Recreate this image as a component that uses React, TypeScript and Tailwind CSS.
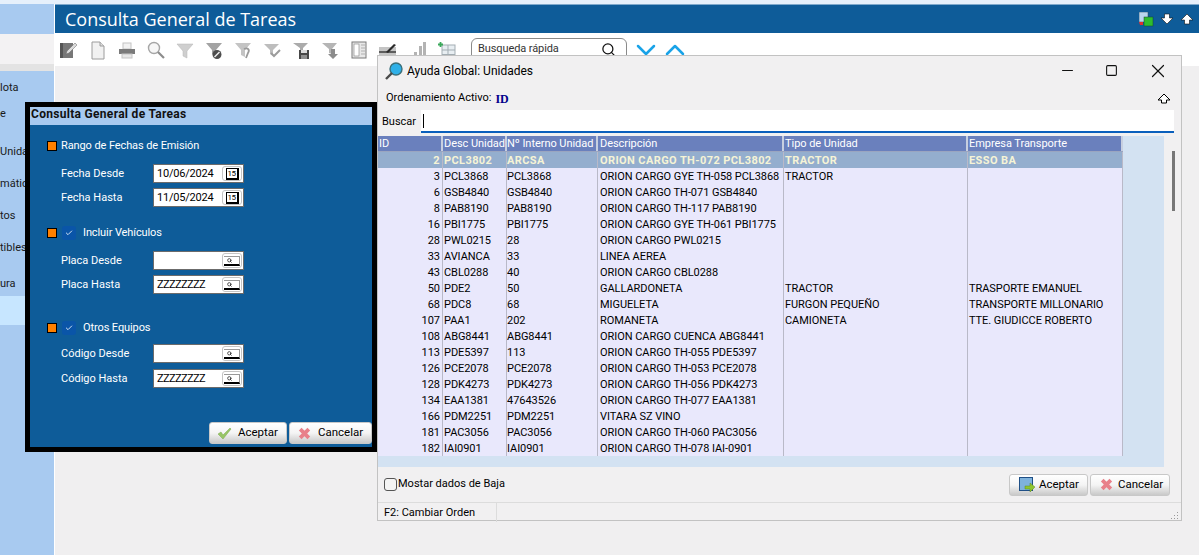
import type { ReactNode } from 'react';
import { X, Minus, Square, ChevronDown, ChevronUp, Search, Check } from 'lucide-react';

const rows = [
  ['2', 'PCL3802', 'ARCSA', 'ORION CARGO TH-072 PCL3802', 'TRACTOR', 'ESSO BA'],
  ['3', 'PCL3868', 'PCL3868', 'ORION CARGO GYE TH-058 PCL3868', 'TRACTOR', ''],
  ['6', 'GSB4840', 'GSB4840', 'ORION CARGO TH-071 GSB4840', '', ''],
  ['8', 'PAB8190', 'PAB8190', 'ORION CARGO TH-117 PAB8190', '', ''],
  ['16', 'PBI1775', 'PBI1775', 'ORION CARGO GYE TH-061 PBI1775', '', ''],
  ['28', 'PWL0215', '28', 'ORION CARGO PWL0215', '', ''],
  ['33', 'AVIANCA', '33', 'LINEA AEREA', '', ''],
  ['43', 'CBL0288', '40', 'ORION CARGO CBL0288', '', ''],
  ['50', 'PDE2', '50', 'GALLARDONETA', 'TRACTOR', 'TRASPORTE EMANUEL'],
  ['68', 'PDC8', '68', 'MIGUELETA', 'FURGON PEQUEÑO', 'TRANSPORTE MILLONARIO'],
  ['107', 'PAA1', '202', 'ROMANETA', 'CAMIONETA', 'TTE. GIUDICCE ROBERTO'],
  ['108', 'ABG8441', 'ABG8441', 'ORION CARGO CUENCA ABG8441', '', ''],
  ['113', 'PDE5397', '113', 'ORION CARGO TH-055 PDE5397', '', ''],
  ['126', 'PCE2078', 'PCE2078', 'ORION CARGO TH-053 PCE2078', '', ''],
  ['128', 'PDK4273', 'PDK4273', 'ORION CARGO TH-056 PDK4273', '', ''],
  ['134', 'EAA1381', '47643526', 'ORION CARGO TH-077 EAA1381', '', ''],
  ['166', 'PDM2251', 'PDM2251', 'VITARA SZ VINO', '', ''],
  ['181', 'PAC3056', 'PAC3056', 'ORION CARGO TH-060 PAC3056', '', ''],
  ['182', 'IAI0901', 'IAI0901', 'ORION CARGO TH-078 IAI-0901', '', ''],
];

const headers = ['ID', 'Desc Unidad', 'Nº Interno Unidad', 'Descripción', 'Tipo de Unidad', 'Empresa Transporte'];

const colClass = 'grid grid-cols-[65px_64px_91px_186px_184px_155px]';

const sideItems = [
  { label: 'lota', cls: 'h-[26px]' },
  { label: 'e', cls: 'h-[26px]' },
  { label: 'Unida', cls: 'h-[32px] mt-[9px]' },
  { label: 'mátic', cls: 'h-[32px]' },
  { label: 'tos', cls: 'h-[32px]' },
  { label: 'tibles', cls: 'h-[32px]' },
  { label: 'ura', cls: 'h-[24px] mt-[8px]' },
];

const toolbarIcons: ReactNode[] = [
  <>
    <rect x="1" y="3" width="13" height="15" fill="#777" />
    <rect x="1" y="3" width="3" height="15" fill="#555" />
    <path d="M7 14l1-3 8-8 2 2-8 8z" fill="#dcdcdc" stroke="#666" strokeWidth="0.5" />
  </>,
  <>
    <path d="M4 2h8l4 4v13H4z" fill="#f1f1f1" stroke="#9c9c9c" />
    <path d="M12 2v4h4" fill="#ddd" stroke="#9c9c9c" />
  </>,
  <>
    <rect x="6" y="3" width="8" height="6" fill="#f2f2f2" stroke="#c4c4c4" />
    <rect x="2" y="9" width="16" height="5" fill="#7a7a7a" />
    <rect x="5" y="14" width="10" height="4" fill="#e6e6e6" stroke="#c4c4c4" />
  </>,
  <>
    <circle cx="8" cy="8" r="5.5" fill="#f7f7f7" stroke="#a6a6a6" strokeWidth="1.4" />
    <path d="M12 12l6 6" stroke="#8c8c8c" strokeWidth="2.2" />
  </>,
  <path d="M2 4h16l-6 7v7l-4-2v-5z" fill="#cfcfcf" stroke="#b5b5b5" strokeWidth="0.5" />,
  <>
    <path d="M2 3h16l-6 7v6l-4-2v-4z" fill="#a3a3a3" />
    <circle cx="13" cy="14.5" r="4.5" fill="#4d4d4d" />
    <path d="M10.5 17l5-5" stroke="#eee" strokeWidth="1.4" />
  </>,
  <>
    <path d="M2 3h16l-6 7v7l-4-2v-5z" fill="#c4c4c4" />
    <path d="M11 9c4-2 6 1 4 4l-2 5" stroke="#9a9a9a" strokeWidth="1.8" fill="none" />
  </>,
  <>
    <path d="M2 4h15l-6 6v6l-3-2v-4z" fill="#bdbdbd" />
    <path d="M9 13l3 3 6-6" stroke="#9c9c9c" strokeWidth="2" fill="none" />
  </>,
  <>
    <path d="M2 3h15l-5 5v3l-3 1V8z" fill="#ababab" />
    <rect x="8" y="10" width="10" height="9" fill="#474747" />
    <rect x="10" y="10" width="6" height="3" fill="#ddd" />
    <rect x="10" y="15" width="6" height="4" fill="#8f8f8f" />
  </>,
  <>
    <path d="M2 3h15l-5 6v5l-3-1V9z" fill="#b5b5b5" />
    <path d="M11 9h4v5h3l-5 5-5-5h3z" fill="#8c8c8c" />
  </>,
  <>
    <rect x="3" y="2" width="14" height="16" fill="#e8e8e8" stroke="#7a7a7a" />
    <rect x="5" y="4" width="5" height="12" fill="#fff" stroke="#808080" strokeWidth="0.6" />
    <path d="M12 5h4M12 8h4M12 11h4M12 14h4" stroke="#b0b0b0" />
  </>,
  <>
    <rect x="1" y="7" width="17" height="10" fill="#c4c4c4" />
    <rect x="1" y="11" width="17" height="2" fill="#5e5e5e" />
    <path d="M8 12l8-8 2 1-8 8z" fill="#2a2a2a" />
  </>,
  <path d="M2 18h3v-3H2zM7 18h3v-6H7zM12 18h3V6h-3zM16 18h3V2h-3z" fill="#b3b3b3" />,
  <>
    <rect x="6" y="5" width="13" height="14" fill="#e8eef2" stroke="#a3adb3" />
    <path d="M12 5v14M6 10h13M6 14.5h13" stroke="#a3adb3" />
    <path d="M4.5 2v5M2 4.5h5" stroke="#3aa85a" strokeWidth="1.8" />
  </>,
];

const fieldBox = 'w-[91px] h-[19px] bg-white border border-[#6b6b6b] flex items-center justify-between pl-[3px] pr-[1px] text-[11px] text-black';

function CalendarButton() {
  return (
    <span className="w-[20px] h-[15px] border border-[#c4c4c4] rounded-[3px] flex items-center justify-center">
      <span className="w-[13px] h-[12px] bg-white border-t border-l border-black border-b-2 border-r-2 text-[8px] leading-[9px] tracking-[-0.4px] text-center text-black">15</span>
    </span>
  );
}

function LookupButton() {
  return (
    <span className="w-[20px] h-[15px] border border-[#c4c4c4] rounded-[3px] flex items-center justify-center">
      <span className="w-[16px] h-[10px] border-b-2 border-black border-r border-r-[#999] border-t border-t-[#999] flex items-start pl-[3px] pt-px">
        <Search className="w-[5px] h-[5px] text-black" strokeWidth={3} />
      </span>
    </span>
  );
}

function FilterField({ label, value, kind }: { label: string; value: string; kind: 'date' | 'lookup' }) {
  return (
    <div className="flex items-center h-[19px] pl-[31px]">
      <span className="w-[92px] text-white text-[11px] pt-[2px]">{label}</span>
      <div className={fieldBox}>
        <span className={kind === 'date' ? 'tracking-[-0.2px] pt-[2px]' : 'tracking-[-0.6px] pt-[2px]'}>{value}</span>
        {kind === 'date' ? <CalendarButton /> : <LookupButton />}
      </div>
    </div>
  );
}

function SectionTitle({ label, checked }: { label: string; checked?: boolean }) {
  return (
    <div className="flex items-center h-[20px] pt-[2px] pl-[17px] text-white text-[11px] tracking-[-0.1px]">
      <span className="w-[10px] h-[10px] bg-[#ff8000] border border-black shrink-0" />
      {checked ? (
        <>
          <span className="ml-[5px] w-[14px] h-[14px] rounded-[3px] bg-[#0a55a8] flex items-center justify-center">
            <Check className="w-[8px] h-[8px] text-[#cfe0f2]" strokeWidth={3} />
          </span>
          <span className="ml-[7px]">{label}</span>
        </>
      ) : (
        <span className="ml-[4px]">{label}</span>
      )}
    </div>
  );
}

function RaisedButton({ icon, label, className }: { icon: ReactNode; label: string; className: string }) {
  return (
    <button className={`h-[22px] rounded-[3px] border border-[#c8c8c8] bg-gradient-to-b from-white via-[#f4f4f4] to-[#c9c9c9] flex items-center text-[11.5px] text-black ${className}`}>
      {icon}
      {label}
    </button>
  );
}

function RedCross() {
  return (
    <svg width="13" height="13" viewBox="0 0 13 13" className="shrink-0">
      <path d="M2.2 2.2l8.6 8.6M10.8 2.2l-8.6 8.6" stroke="#e8808a" strokeWidth="3.8" />
    </svg>
  );
}

function GreenTick() {
  return (
    <svg width="15" height="13" viewBox="0 0 15 13" className="shrink-0">
      <path d="M1 7l3-2 2 3 7-7 1 1-8 10z" fill="#97c565" stroke="#7ba84c" strokeWidth="0.5" />
    </svg>
  );
}

function FilterDialog() {
  return (
    <div className="absolute left-[25px] top-[102px] w-[352px] h-[350px] border-[5px] border-black bg-[#0e5c99] flex flex-col">
      <div className="h-[18px] bg-[#a8caf0] text-[12px] font-bold tracking-[0.3px] text-[#111] leading-[15px] pl-px">Consulta General de Tareas</div>
      <div className="mt-[10px]"><SectionTitle label="Rango de Fechas de Emisión" /></div>
      <div className="mt-[9px]"><FilterField label="Fecha Desde" value="10/06/2024" kind="date" /></div>
      <div className="mt-[5px]"><FilterField label="Fecha Hasta" value="11/05/2024" kind="date" /></div>
      <div className="mt-[15px]"><SectionTitle label="Incluir Vehículos" checked /></div>
      <div className="mt-[9px]"><FilterField label="Placa Desde" value="" kind="lookup" /></div>
      <div className="mt-[5px]"><FilterField label="Placa Hasta" value="ZZZZZZZZ" kind="lookup" /></div>
      <div className="mt-[23px]"><SectionTitle label="Otros Equipos" checked /></div>
      <div className="mt-[7px]"><FilterField label="Código Desde" value="" kind="lookup" /></div>
      <div className="mt-[6px]"><FilterField label="Código Hasta" value="ZZZZZZZZ" kind="lookup" /></div>
      <div className="mt-auto mb-[3px] flex justify-end gap-[2px]">
        <RaisedButton className="w-[78px] pl-[7px] gap-[6px]" label="Aceptar" icon={<GreenTick />} />
        <RaisedButton className="w-[83px] pl-[8px] gap-[7px]" label="Cancelar" icon={<RedCross />} />
      </div>
    </div>
  );
}

function HelpDialog() {
  return (
    <div className="absolute left-[377px] top-[55px] w-[805px] h-[466px] border border-[#c2c2c2] bg-[#f1f0f1] flex flex-col text-black">
      <div className="h-[29px] flex items-center pl-[7px] shrink-0">
        <svg width="18" height="18" viewBox="0 0 18 18">
          <circle cx="11" cy="7" r="6" fill="#2fb0e8" stroke="#3a6f7a" strokeWidth="1.4" />
          <path d="M7 11l-6 6" stroke="#4a4a4a" strokeWidth="2.4" />
        </svg>
        <span className="ml-[4px] text-[12px]">Ayuda Global: Unidades</span>
        <div className="ml-auto flex items-center gap-[29px] pr-[12px] text-[#111]">
          <Minus className="w-[17px] h-[17px]" strokeWidth={1.5} />
          <Square className="w-[13px] h-[13px]" strokeWidth={2} />
          <X className="w-[22px] h-[22px]" strokeWidth={1.3} />
        </div>
      </div>
      <div className="h-[25px] flex items-center pl-[8px] pr-[10px] pt-[2px] shrink-0 text-[11px]">
        <span>Ordenamiento Activo:</span>
        <span className="ml-[4px] font-['Liberation_Serif',serif] font-bold text-[12px] text-[#00008b]">ID</span>
        <svg width="14" height="12" viewBox="0 0 14 12" className="ml-auto">
          <path d="M7 1L1 7h3.5v3h5V7H13z" fill="#fff" stroke="#000" />
        </svg>
      </div>
      <div className="h-[23px] flex items-stretch pr-[7px] shrink-0">
        <span className="w-[43px] pl-[4px] pt-[2px] flex items-center text-[11px]">Buscar</span>
        <div className="flex-1 bg-white border-b-2 border-[#0a5fbc] flex items-center pl-[2px]">
          <span className="w-px h-[14px] bg-black" />
        </div>
      </div>
      <div className="mt-[3px] w-[786px] h-[331px] shrink-0 bg-[#d3e2f2] text-[11px] tracking-[-0.05px]">
        <div className={`${colClass} w-[745px] h-[16px] bg-[#6a80bd] text-white border-b border-[#9aa5c0]`}>
          {headers.map((h, j) => (
            <div key={h} className={`border-r-2 border-[#c7cfe0] leading-[15px] whitespace-nowrap overflow-hidden ${j === 3 ? 'pl-[2px]' : j === 2 ? 'pl-0' : 'pl-px'}`}>{h}</div>
          ))}
        </div>
        {rows.map((row, i) => (
          <div
            key={row[0]}
            className={`${colClass} w-[745px] h-[16px] leading-[18px] ${i === 0 ? 'bg-[#94aece] text-[#f6f4d6] font-bold tracking-[0.4px]' : 'bg-[#e9e8fc] text-black'}`}
          >
            {row.map((cell, j) => (
              <div
                key={j}
                className={`h-[16px] border-r border-[#b9b9c8] whitespace-nowrap overflow-hidden ${j === 0 ? 'text-right pr-[2px]' : j === 3 ? 'pl-[2px]' : j === 2 ? 'pl-0' : 'pl-px'}`}
              >
                {cell}
              </div>
            ))}
          </div>
        ))}
      </div>
      <div className="h-[35px] flex items-center shrink-0 pl-[6px] pr-[11px]">
        <span className="w-[13px] h-[13px] rounded-[3px] border border-[#555] bg-[#f4f4f4]" />
        <span className="ml-[1px] text-[11px]">Mostar dados de Baja</span>
        <div className="ml-auto flex gap-[2px]">
          <RaisedButton
            className="w-[79px] pl-[9px] gap-[3px]"
            label="Aceptar"
            icon={
              <svg width="17" height="16" viewBox="0 0 17 16" className="shrink-0">
                <rect x="0.5" y="0.5" width="13" height="13" fill="#7eb2dc" stroke="#1f4f86" />
                <path d="M6 9h5V6l5 4-5 5v-3H6z" fill="#8fc62e" stroke="#5f8a1e" strokeWidth="0.5" />
              </svg>
            }
          />
          <RaisedButton className="w-[80px] pl-[9px] gap-[5px]" label="Cancelar" icon={<RedCross />} />
        </div>
      </div>
      <div className="flex-1 flex border-t border-[#dcdcdc] text-[11px] items-stretch relative">
        <span className="w-[119px] pl-[6px] pt-[2px] border-r border-[#dcdcdc] flex items-center">F2: Cambiar Orden</span>
        <svg width="9" height="9" viewBox="0 0 9 9" className="absolute right-[2px] bottom-[2px]">
          <path d="M7 1h1v1H7zM4 4h1v1H4zM7 4h1v1H7zM1 7h1v1H1zM4 7h1v1H4zM7 7h1v1H7z" fill="#9a9a9a" />
        </svg>
      </div>
    </div>
  );
}

export default function App() {
  return (
    <div className="relative w-[1199px] h-[555px] overflow-hidden bg-[#f0eff0] font-['Roboto','Liberation_Sans',sans-serif]">
      <div className="h-[4px] bg-[#e6f0fb]" />
      <div className="flex h-[551px]">
        <aside className="w-[54px] shrink-0 flex flex-col border-r border-white box-content">
          <div className="h-[30px] bg-[#a8caf0]" />
          <div className="h-[30px] bg-[#f3f2f3]" />
          <div className="h-[7px] bg-[#e3e3e3]" />
          <div className="flex-1 bg-[#a8caf0] flex flex-col pt-[4px] text-[11px] text-[#1a1a1a]">
            {sideItems.map((item) => (
              <div key={item.label} className={`${item.cls} flex items-center whitespace-nowrap`}>{item.label}</div>
            ))}
            <div className="h-[29px] bg-[#c7e6ff]" />
          </div>
        </aside>
        <main className="flex-1 flex flex-col">
          <div className="h-[29px] bg-[#0e5c99] border-t border-[#7fa9cc] flex items-center pl-[10px] pr-[5px]">
            <span className="text-white text-[18px] font-['Open_Sans',sans-serif] leading-none">Consulta General de Tareas</span>
            <div className="ml-auto flex items-center gap-[6px]">
              <svg width="15" height="15" viewBox="0 0 15 15">
                <rect x="0" y="0" width="9" height="10" fill="#b9d6ee" stroke="#345" strokeWidth="0.5" />
                <rect x="5" y="5" width="9" height="9" fill="#2ebd2e" stroke="#143" strokeWidth="0.5" />
                <path d="M0 10h4v3H1z" fill="#e03030" />
              </svg>
              <svg width="14" height="12" viewBox="0 0 14 12"><path d="M4.5 1h5v4H13l-6 6-6-6h3.5z" fill="#fff" stroke="#111" strokeWidth="0.6" /></svg>
              <svg width="14" height="12" viewBox="0 0 14 12"><path d="M7 1l6 6H9.5v4h-5V7H1z" fill="#fff" stroke="#111" strokeWidth="0.6" /></svg>
            </div>
          </div>
          <div className="h-[33px] bg-white flex items-center pl-[4px]">
            <div className="flex items-center gap-[9px]">
              {toolbarIcons.map((icon, i) => (
                <svg key={i} width="20" height="20" viewBox="0 0 20 20" className="shrink-0">{icon}</svg>
              ))}
            </div>
            <div className="ml-[15px] w-[156px] h-[23px] border border-[#8a8a8a] rounded-[6px] flex items-center pl-[6px] pr-[10px] text-[11px] tracking-[-0.1px] text-[#333] self-start mt-[5px]">
              <span>Busqueda rápida</span>
              <Search className="ml-auto w-[15px] h-[15px] text-[#111]" strokeWidth={2} />
            </div>
            <ChevronDown className="ml-[3px] w-[32px] h-[32px] text-[#1aa3e8] shrink-0" strokeWidth={1.9} />
            <ChevronUp className="-ml-[3px] w-[32px] h-[32px] text-[#1aa3e8] shrink-0" strokeWidth={1.9} />
          </div>
        </main>
      </div>
      <FilterDialog />
      <HelpDialog />
      {/* barra de scroll de la grilla */}
      <div className="absolute left-[1172px] top-[151px] w-[3px] h-[60px] bg-[#777]" />
    </div>
  );
}
